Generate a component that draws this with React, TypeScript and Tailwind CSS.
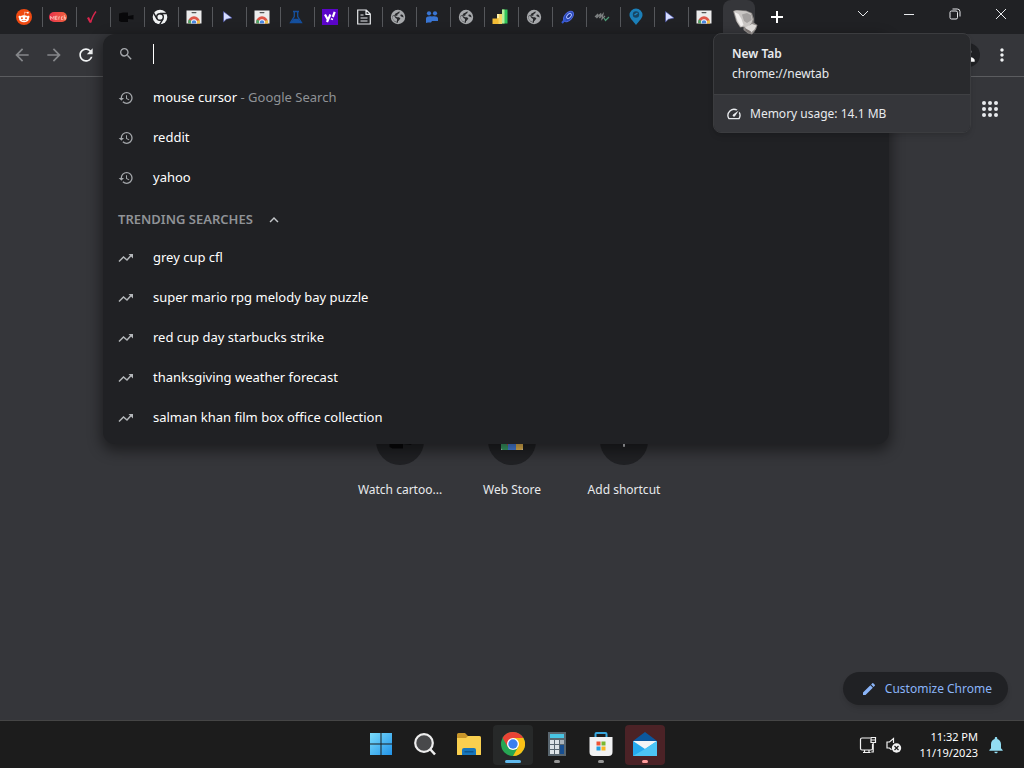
import React, { useId } from "react";
import {
  MdAdd,
  MdArrowBack,
  MdArrowForward,
  MdEdit,
  MdHistory,
  MdKeyboardArrowUp,
  MdMoreVert,
  MdNotifications,
  MdOutlineSpeed,
  MdPerson,
  MdRefresh,
  MdSearch,
} from "react-icons/md";
import { FaRedditAlien } from "react-icons/fa";

function RedditIcon() {
  return (
    <span className="flex size-4 items-center justify-center rounded-full bg-[#f04a12] text-white">
      <FaRedditAlien size={12} />
    </span>
  );
}

function MerchIcon() {
  return (
    <span className="flex h-2.5 w-[18px] items-center justify-center rounded-full bg-linear-to-r from-[#e8304c] to-[#f0603c]">
      <svg viewBox="0 0 14 6" className="w-4" fill="none" stroke="#ffd9cc" strokeOpacity=".8" strokeWidth=".8">
        <path d="M.5 5V2L2 4l1.500-2v3M6.500 2H4.700v3h1.800M4.700 3.500h1.800M7.700 5V2.500h1M11.500 2.500H10V5h1.500M12.500 1v4M12.500 3h1v2" />
      </svg>
    </span>
  );
}

function CheckIcon() {
  return (
    <svg viewBox="0 0 16 16" className="size-4" fill="none" stroke="#d8264c">
      <path d="M4 8.500 6.500 13.300" strokeWidth="2.200" />
      <path d="M6.500 13.800C8 9 9.500 5.500 12 2.500" strokeWidth="1.400" />
    </svg>
  );
}

function CameraIcon() {
  return (
    <svg viewBox="0 0 16 16" className="size-4" fill="#08080a">
      <path d="M1 4.500 5 3.500h5V7l5.500-1v4.500L10 10v3H3L1 12z" />
    </svg>
  );
}

function ChromeMonoIcon() {
  return (
    <svg viewBox="0 0 16 16" className="size-4">
      <circle cx="8" cy="8" r="7.300" fill="#f1f3f4" />
      <circle cx="8" cy="8" r="3.300" fill="none" stroke="#202124" strokeWidth="1.400" />
      <path d="M8 4.500h7M5 9.800 1.600 3.800M11 9.800 7.600 15.600" stroke="#202124" strokeWidth="1.400" />
    </svg>
  );
}

function StoreFavicon() {
  const clip = useId();
  return (
    <svg viewBox="0 0 16 16" className="size-4">
      <clipPath id={clip}>
        <path d="M.5 1.500h15v13H.5z" />
      </clipPath>
      <g clipPath={`url(#${clip})`}>
        <path d="M0 1h16v14H0z" fill="#ececec" />
        <rect x="5.500" y="3" width="5" height="1.200" rx=".6" fill="#555" />
        <circle cx="8" cy="13" r="5.800" fill="#dd5548" />
        <path d="M8 13 2.800 10.500A5.800 5.800 0 0 0 5 18z" fill="#4ba668" />
        <path d="m8 13 5.600-2A5.800 5.800 0 0 1 11 18z" fill="#eac14c" />
        <circle cx="8" cy="13.300" r="3" fill="#fff" />
        <circle cx="8" cy="13.500" r="2.300" fill="#4a86e0" />
      </g>
    </svg>
  );
}

function PointerIcon() {
  return (
    <svg viewBox="0 0 16 16" className="size-4">
      <path d="M3.500 2.500v10.500L6.300 10.300l5.700-1.300z" fill="#d5dcff" stroke="#3d47a0" strokeWidth=".6" />
    </svg>
  );
}

function FlaskIcon() {
  return (
    <svg viewBox="0 0 16 16" className="size-4" fill="none" stroke="#15509f" strokeWidth="1.300">
      <path d="M5 2.500h6M6.300 3v4.500L2.500 13.500h11L9.700 7.500V3" />
      <path d="M6 10.500h4l2 2.500H4z" fill="#15509f" />
    </svg>
  );
}

function YahooIcon() {
  return (
    <span className="flex size-4 items-center justify-center bg-[#5b05c9]">
      <svg viewBox="0 0 16 16" className="size-4" fill="none" stroke="#fff" strokeWidth="2.200">
        <path d="m3 5.500 2.600 4.800M8.400 5.500 5 13M12.700 2.800 10.800 8M10.200 9.300l-.5 1.500" />
      </svg>
    </span>
  );
}

function PageIcon() {
  return (
    <svg viewBox="0 0 16 16" className="size-4" fill="none" stroke="#e8eaed" strokeWidth="1.200">
      <path d="M1.700 1h8.600l4 4v10H1.700zM10 1v4.300h4.300M4.500 6h3M4.500 9h7M4.500 12h7" />
    </svg>
  );
}

function GlobeIcon() {
  return (
    <svg viewBox="0 0 16 16" className="size-4">
      <circle cx="8" cy="8" r="7.200" fill="#a6a8ab" />
      <path d="M8.500 2.300C6.500 3.300 6.800 4.500 8.200 5c1.200.5.800 2-.4 2.200-1 .2-.6 1.300.4 1.300h2c1.300 0 1.300 1.300 2.800 1.300.9-2.700.2-5.800-1.900-7-.8-.5-1.700-.6-2.600-.5z" fill="#a6a8ab" />
      <path d="M9.500 2.200C7.700 3 7.200 4.200 6 4.300c-1 .2-.6 1.700-2 1.900L2.200 7C2 10.500 4.500 13.500 8 13.700v-1.500c1.200-.2.900-1.500 1.900-1.900 1.200-.4-.2-1.900-1.700-2-1.700-.1-2-1.400-4-1.400L5.500 9l1.600 1.100-.4 2.800C4 12.300 2.400 10 2.400 7.500l1.800-.7h3c.7-.6-.2-1.700.9-2.100 1.300-.3 1.600-1.200 1.400-2.500zM10.800 5.500c-1 1 0 2.200 1.200 2.200l1.500.9c.1-2-.9-3.700-2.700-3.100z" fill="#27282b" />
    </svg>
  );
}

function PeopleIcon() {
  return (
    <svg viewBox="0 0 16 16" className="size-4" fill="#3975d2">
      <circle cx="5" cy="4.300" r="2.100" />
      <circle cx="11" cy="4.300" r="2.100" />
      <path d="M2 14v-4.500C2 7.500 5 7 8 7.500c3-.5 6 0 6 2V12H8l-1 1.500H4z" />
    </svg>
  );
}

function BlocksIcon() {
  return (
    <svg viewBox="0 0 16 16" className="size-4">
      <path d="M10 .5h5.500v14H10z" fill="#31c65b" />
      <path d="M10 .5h2.500v14H10z" fill="#b8ef99" />
      <path d="M5 5h5v10H5z" fill="#f6d463" />
      <path d="M.5 9.500h6V15h-6z" fill="#f3bd35" />
      <path d="M5 5h2v4H5z" fill="#fff0a6" />
    </svg>
  );
}

function LinkIcon() {
  return (
    <svg viewBox="0 0 16 16" className="size-4" fill="none">
      <ellipse cx="8.500" cy="7.500" rx="3.700" ry="6.300" transform="rotate(42 8.500 7.500)" fill="#2849b8" stroke="#4f68df" />
      <ellipse cx="9" cy="7" rx="1.700" ry="3" transform="rotate(42 9 7)" fill="#183087" stroke="#a8b8ff" />
      <path d="m2 14 3.500-4" stroke="#3558d0" strokeWidth="2" />
    </svg>
  );
}

function ScribbleIcon() {
  return (
    <svg viewBox="0 0 16 16" className="size-4" fill="none" strokeWidth="1.200">
      <path d="m1 8 3-3-1.500 4L7 4.500 5.500 9 9 5l-1 5 3-3" stroke="#7c7f80" />
      <path d="m10 9 1.500 2.500L15 8" stroke="#4d9a76" />
    </svg>
  );
}

function PinIcon() {
  return (
    <svg viewBox="0 0 16 18" className="h-[18px] w-4">
      <path d="M8 17C5 13 1.500 10 1.500 7a6.500 6.500 0 0 1 13 0c0 3-3.500 6-6.500 10z" fill="#1b7fb8" />
      <circle cx="8" cy="6.500" r="3.200" fill="#174563" />
      <path d="m6.500 7 3-2" stroke="#1b86c4" strokeWidth="1.500" />
    </svg>
  );
}

const tabs = [
  { title: "Reddit", icon: <RedditIcon /> },
  { title: "Merch", icon: <MerchIcon /> },
  { title: "Verify", icon: <CheckIcon /> },
  { title: "Watch cartoons", icon: <CameraIcon /> },
  { title: "Chrome", icon: <ChromeMonoIcon /> },
  { title: "Web Store", icon: <StoreFavicon /> },
  { title: "Cursors", icon: <PointerIcon /> },
  { title: "Web Store", icon: <StoreFavicon /> },
  { title: "Experiments", icon: <FlaskIcon /> },
  { title: "Yahoo", icon: <YahooIcon /> },
  { title: "Document", icon: <PageIcon /> },
  { title: "Web page", icon: <GlobeIcon /> },
  { title: "People", icon: <PeopleIcon /> },
  { title: "Web page", icon: <GlobeIcon /> },
  { title: "Blocks", icon: <BlocksIcon /> },
  { title: "Web page", icon: <GlobeIcon /> },
  { title: "Links", icon: <LinkIcon /> },
  { title: "Sketch", icon: <ScribbleIcon /> },
  { title: "Map", icon: <PinIcon /> },
  { title: "Cursors", icon: <PointerIcon /> },
  { title: "Web Store", icon: <StoreFavicon /> },
];

function GloveCursor() {
  return (
    <svg viewBox="0 0 26 26" className="pointer-events-none absolute top-2.5 left-2.5 z-30 size-[26px]" aria-hidden="true">
      <path d="M0 1 3 0l10 .5 6 2.500 2 6-.5 3.500 4 2.500-1.500 4.500-4 5-4-1-4.500-3.500v-3L7 17.500 3 11z" fill="#8d8987" />
      <path d="M1 1 4 .5l9 .8 5 2.200 1.700 6-1.200 3.500-4 4.500-4-1-3 .5-3.500-5z" fill="#c9c6c4" />
      <path d="M9 4.500 14 3l4 2 .7 5-4.700 3-3-2z" fill="#a3a09f" />
      <path d="m1.500 2 3 8.500L8 16.500l2.500-1.500-2-6-3-5z" fill="#f1efee" />
      <path d="m12 17.500 7-3.500 4.500 1.500-2 4-3.500 3-5-2.500z" fill="#dedbd9" />
      <path d="m12 18 6 3.500-.5 2.500-5-3.500z" fill="#77716f" />
    </svg>
  );
}

const stroke = "size-3 fill-none stroke-[#e8eaed]";

function TabStrip() {
  return (
    <header className="flex h-[34px] items-stretch bg-[#202124] pl-[9px]">
      <div role="tablist" aria-label="Open tabs" className="flex">
        {tabs.map((tab, i) => (
          <button
            key={i}
            role="tab"
            aria-label={tab.title}
            aria-selected={false}
            className="flex w-[34px] items-center"
          >
            <span className="flex w-[33px] justify-center pr-[3px]">{tab.icon}</span>
            {i < tabs.length - 1 && <span className="h-5 w-px bg-[#55575b]" />}
          </button>
        ))}
        <div className="relative flex">
          <button
            role="tab"
            aria-label="New Tab"
            aria-selected
            className="w-8 rounded-t-lg bg-[#35363a]"
          />
          <GloveCursor />
        </div>
      </div>
      <button aria-label="New tab" className="flex w-10 items-center justify-center pl-1 text-white">
        <svg viewBox="0 0 12 12" className="size-3" stroke="currentColor" strokeWidth="2">
          <path d="M6 0v12M0 6h12" />
        </svg>
      </button>
      <div className="ml-auto flex items-center pb-1.5">
        <button aria-label="Search tabs" className="flex w-[46px] justify-center">
          <svg viewBox="0 0 12 12" className={stroke}>
            <path d="m1 3 5 5 5-5" />
          </svg>
        </button>
        <button aria-label="Minimize" className="flex w-[46px] justify-center">
          <svg viewBox="0 0 12 12" className={stroke}>
            <path d="M1 6.500h10" />
          </svg>
        </button>
        <button aria-label="Restore" className="flex w-[46px] justify-center">
          <svg viewBox="0 0 12 12" className={stroke}>
            <rect x="1" y="3" width="7.500" height="8" rx="1.500" />
            <path d="M3.500 1h4.800A2.700 2.700 0 0 1 11 3.700V8.500" />
          </svg>
        </button>
        <button aria-label="Close" className="flex w-[46px] justify-center">
          <svg viewBox="0 0 12 12" className={stroke}>
            <path d="m1 1 10 10M11 1 1 11" />
          </svg>
        </button>
      </div>
    </header>
  );
}

const recent = [
  { text: "mouse cursor", note: " - Google Search" },
  { text: "reddit" },
  { text: "yahoo" },
];

const trending = [
  "grey cup cfl",
  "super mario rpg melody bay puzzle",
  "red cup day starbucks strike",
  "thanksgiving weather forecast",
  "salman khan film box office collection",
];

function TrendIcon() {
  return (
    <svg viewBox="0 0 16 16" className="size-4 shrink-0" fill="none" stroke="#b4b7ba" strokeWidth="1.500">
      <path d="m1 11.500 4.500-4.500 3.500 3 4.500-5" />
      <path d="M10.500 4H15v4.500z" fill="#b4b7ba" stroke="none" />
    </svg>
  );
}

function Omnibox() {
  return (
    <section className="absolute top-0 right-[135px] left-[103px] z-10 rounded-xl bg-[#202124] pb-1.5 shadow-[0_5px_14px_2px_rgba(0,0,0,0.45)]">
      <label className="flex h-11 items-center gap-[19px] pb-1 pl-[15px]">
        <MdSearch size={16} className="shrink-0 text-[#a5a8ac]" />
        <span className="h-5 w-px bg-white" />
        <input aria-label="Search Google or type a URL" className="min-w-0 flex-1 bg-transparent outline-none" />
      </label>
      <ul>
        {recent.map((item) => (
          <li key={item.text}>
            <button className="flex h-10 w-full items-center gap-[19px] pl-[15px] text-left">
              <MdHistory size={16} className="shrink-0 text-[#a5a8ac]" />
              <span className="text-white">
                {item.text}
                {item.note && <span className="whitespace-pre text-[#8f9296]">{item.note}</span>}
              </span>
            </button>
          </li>
        ))}
      </ul>
      <button className="flex h-10 items-center gap-3 pt-1 pl-[15px] font-semibold text-[#909397]">
        TRENDING SEARCHES
        <MdKeyboardArrowUp size={18} className="text-[#c4c7ca]" />
      </button>
      <ul>
        {trending.map((item) => (
          <li key={item}>
            <button className="flex h-10 w-full items-center gap-[19px] pl-[15px] text-left text-white">
              <TrendIcon />
              {item}
            </button>
          </li>
        ))}
      </ul>
    </section>
  );
}

function TabCard() {
  return (
    <aside className="absolute -top-px right-[53px] z-20 w-[258px] overflow-hidden rounded-lg border border-[#3b3c3f] bg-[#292a2d] text-xs text-[#e8eaed] shadow-md">
      <div className="h-[60px] px-[18px] pt-2.5 leading-5">
        <p className="font-semibold">New Tab</p>
        <p>chrome://newtab</p>
      </div>
      <p className="flex h-[38px] items-center gap-2 border-t border-[#3f4043] bg-[#35363a] px-3">
        <MdOutlineSpeed size={16} />
        Memory usage: 14.1 MB
      </p>
    </aside>
  );
}

function Toolbar() {
  return (
    <nav className="flex h-[43px] items-center border-b border-[#5b5c5f] bg-[#35363a] px-3">
      <div className="flex items-center gap-3">
        <button aria-label="Back" className="text-[#85878a]"><MdArrowBack size={20} /></button>
        <button aria-label="Forward" className="text-[#85878a]"><MdArrowForward size={20} /></button>
        <button aria-label="Reload" className="text-[#f1f3f4]"><MdRefresh size={20} /></button>
      </div>
      <div className="ml-auto flex items-center gap-3">
        <button aria-label="Profile" className="flex size-6 items-center justify-center rounded-full bg-[#202124] text-white">
          <MdPerson size={20} />
        </button>
        <button aria-label="Menu" className="text-[#f1f3f4]"><MdMoreVert size={20} /></button>
      </div>
    </nav>
  );
}

function AppsGrid() {
  return (
    <svg viewBox="0 0 18 18" className="size-[18px]" fill="#e8eaed">
      {[3, 9, 15].map((y) => [3, 9, 15].map((x) => <circle key={`${x}-${y}`} cx={x} cy={y} r="2" />))}
    </svg>
  );
}

function StoreTileIcon() {
  return (
    <svg viewBox="0 0 24 24" className="size-6">
      <path d="M1 3h22v18H1z" fill="#e9e9e9" />
      <path d="M1 13h8v8H3a2 2 0 0 1-2-2z" fill="#3ca46a" />
      <path d="M8 13h9v8H8z" fill="#4b86e8" />
      <path d="M16 13h7v6a2 2 0 0 1-2 2h-5z" fill="#f0be55" />
      <path d="M5 13h3v4z" fill="#d94c3f" />
    </svg>
  );
}

const shortcuts = [
  { label: "Watch cartoo...", icon: <span className="scale-150"><CameraIcon /></span> },
  { label: "Web Store", icon: <StoreTileIcon /> },
  { label: "Add shortcut", icon: <MdAdd size={20} className="text-[#e8eaed]" /> },
];

function NewTabPage() {
  return (
    <main className="flex flex-1 flex-col text-[#e8eaed]">
      <div className="flex justify-end px-[25px] pt-[23px]">
        <button aria-label="Google apps"><AppsGrid /></button>
      </div>
      <div className="mt-[299px] flex justify-center">
        {shortcuts.map((s) => (
          <a key={s.label} href="#" className="flex w-28 flex-col items-center gap-[15px]">
            <span className="flex size-12 items-center justify-center rounded-full bg-[#202124]">{s.icon}</span>
            <span className="text-xs leading-5">{s.label}</span>
          </a>
        ))}
      </div>
      <div className="mt-auto flex justify-end px-4 pb-[15px]">
        <button className="flex h-[33px] items-center gap-2 rounded-full bg-[#202124] pr-4 pl-[18px] text-xs text-[#8ab4f8] shadow-md">
          <MdEdit size={16} />
          Customize Chrome
        </button>
      </div>
    </main>
  );
}

function WindowsIcon() {
  const fill = useId();
  return (
    <svg viewBox="0 0 24 24" className="size-6">
      <linearGradient id={fill} x1="0" y1="0" x2="1" y2="1">
        <stop stopColor="#7bdcfb" />
        <stop offset="1" stopColor="#2193e8" />
      </linearGradient>
      <path d="M1 1h10.500v10.500H1zM12.500 1H23v10.500H12.500zM1 12.500h10.500V23H1zM12.500 12.500H23V23H12.500z" fill={`url(#${fill})`} />
    </svg>
  );
}

function SearchIcon() {
  return (
    <svg viewBox="0 0 24 24" className="size-6" stroke="#eeeeee">
      <circle cx="11" cy="11" r="8.800" fill="#48494b" strokeWidth="2.200" />
      <path d="m17 17 5 5.500" strokeWidth="2.600" />
    </svg>
  );
}

function FolderIcon() {
  return (
    <svg viewBox="0 0 26 24" className="h-6 w-[26px]">
      <path d="M1 2.500Q1 1 2.500 1H9l3 3h11q2 0 2 2v6H1z" fill="#c9962a" />
      <path d="M1 6h9l2-2h11q2 0 2 2v16.500q0 .5-.5.500h-23q-.5 0-.5-.5z" fill="#f9cf4f" />
      <path d="M6 18q0-2 2-2h10q2 0 2 2v5H6z" fill="#1776bd" />
      <path d="M8.500 19h9v1.500h-9z" fill="#0e568e" />
    </svg>
  );
}

function ChromeIcon() {
  return (
    <svg viewBox="0 0 24 24" className="size-6">
      <circle cx="12" cy="12" r="12" fill="#27a653" />
      <path d="M1.600 6A12 12 0 0 1 22.400 6H12L6.800 15z" fill="#e94335" />
      <path d="M22.400 6A12 12 0 0 1 12 24l5.200-9L12 6z" fill="#fbc116" />
      <circle cx="12" cy="12" r="6" fill="#fff" />
      <circle cx="12" cy="12" r="4.700" fill="#3a7ff0" />
    </svg>
  );
}

function CalculatorIcon() {
  return (
    <svg viewBox="0 0 20 24" className="h-6 w-5">
      <path d="M1 0h18v24H1z" fill="#59666f" />
      <path d="M3 2h14v4H3z" fill="#48c5e4" />
      <path d="M3 8h4v4H3zM8 8h4v4H8zM3 13h4v4H3zM8 13h4v4H8zM3 18h4v4H3zM8 18h4v4H8z" fill="#dce2e6" />
      <path d="M13 8h4v4h-4z" fill="#aab4bb" />
      <path d="M13 13h4v9h-4z" fill="#174f91" />
    </svg>
  );
}

function StoreIcon() {
  return (
    <svg viewBox="0 0 24 24" className="size-6">
      <path d="M6.500 6V2q0-1 1-1h9q1 0 1 1v4" fill="none" stroke="#37a7df" strokeWidth="2" />
      <path d="M.5 5h23v15q0 4-4 4h-15q-4 0-4-4z" fill="#f1f2f3" />
      <path d="M7.500 9.500h4v4h-4z" fill="#ed5434" />
      <path d="M12.500 9.500h4v4h-4z" fill="#79b82f" />
      <path d="M7.500 14.500h4v4h-4z" fill="#209fdf" />
      <path d="M12.500 14.500h4v4h-4z" fill="#f7b721" />
    </svg>
  );
}

function MailIcon() {
  return (
    <svg viewBox="0 0 26 24" className="h-6 w-[26px]">
      <path d="M1 9 13 0l12 9v6H1z" fill="#0b579e" />
      <path d="M1 9h24l-4 8-8 3-8-3z" fill="#f3f4f5" />
      <path d="m1 9 12 8 12-8v15H1z" fill="#25a9ee" />
      <path d="m1 24 12-7 12-8v15z" fill="#4cc4f4" />
    </svg>
  );
}

const apps = [
  { name: "Start", icon: <WindowsIcon />, box: "", mark: "" },
  { name: "Search", icon: <SearchIcon />, box: "", mark: "" },
  { name: "File Explorer", icon: <FolderIcon />, box: "", mark: "" },
  { name: "Google Chrome", icon: <ChromeIcon />, box: "bg-[#272929]", mark: "h-[3px] w-4 bg-[#60b9ed]" },
  { name: "Calculator", icon: <CalculatorIcon />, box: "", mark: "h-[3px] w-1.5 bg-[#969696]" },
  { name: "Microsoft Store", icon: <StoreIcon />, box: "", mark: "h-[3px] w-1.5 bg-[#969696]" },
  { name: "Mail", icon: <MailIcon />, box: "bg-[#4b2226]", mark: "h-[3px] w-1.5 bg-[#ff9c9c]" },
];

function Taskbar() {
  return (
    <footer className="grid h-12 grid-cols-[1fr_auto_1fr] items-center border-t border-[#454545] bg-[#1c1c1c] text-white">
      <div className="col-start-2 flex gap-1 pl-0.5">
        {apps.map((app) => (
          <button
            key={app.name}
            aria-label={app.name}
            className={`flex h-10 w-10 flex-col items-center justify-between rounded pt-[7px] pb-0.5 ${app.box}`}
          >
            {app.icon}
            <span className={`rounded-full ${app.mark}`} />
          </button>
        ))}
      </div>
      <div className="flex items-center justify-end gap-2 pr-[18px]">
        <button aria-label="Network">
          <svg viewBox="0 0 18 18" className="size-[18px]" fill="none" stroke="#f2f2f2" strokeWidth="1.200">
            <path d="M11 2H3Q1.500 2 1.500 3.500v9Q1.500 14 3 14h9q1.500 0 1.500-1.500V8M5.500 14v2.500M10 14v2.500M4 16.500h7.500" />
            <path d="M12 1.500h4.500v5H12zM14.200 6.500V16h-2M12 4h4" />
          </svg>
        </button>
        <button aria-label="Volume muted">
          <svg viewBox="0 0 18 18" className="size-[18px]">
            <path d="M8.500 7V2.500L4.500 6H2v6h2.500l2 1.800" fill="none" stroke="#f2f2f2" strokeWidth="1.200" />
            <circle cx="11.500" cy="12" r="4.700" fill="#f2f2f2" />
            <path d="m9.500 10 4 4m0-4-4 4" stroke="#1c1c1c" strokeWidth="1.200" />
          </svg>
        </button>
        <button className="pl-2 text-right text-[11px] leading-4">
          <time dateTime="2023-11-19T23:32">
            11:32 PM
            <br />
            11/19/2023
          </time>
        </button>
        <button aria-label="Notifications" className="text-[#92ddf2]"><MdNotifications size={20} /></button>
      </div>
    </footer>
  );
}

export default function App() {
  return (
    <div className="flex min-h-screen flex-col bg-[#35363a] font-['Noto_Sans','Open_Sans',sans-serif] text-[13px]">
      <TabStrip />
      <div className="relative flex flex-1 flex-col">
        <Toolbar />
        <NewTabPage />
        <Omnibox />
        <TabCard />
      </div>
      <Taskbar />
    </div>
  );
}
